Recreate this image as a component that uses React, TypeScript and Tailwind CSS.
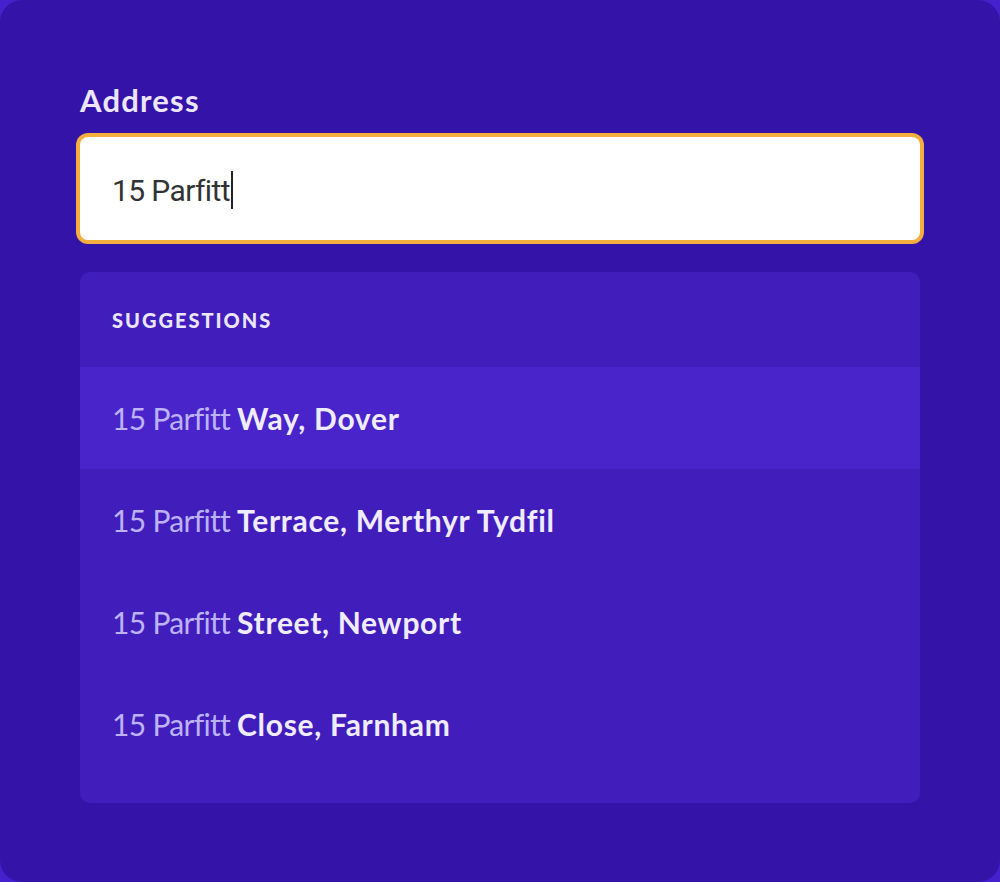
import React from 'react';

const suggestions = [
  { rest: 'Way, Dover', active: true },
  { rest: 'Terrace, Merthyr Tydfil', active: false },
  { rest: 'Street, Newport', active: false },
  { rest: 'Close, Farnham', active: false },
];

export default function App() {
  return (
    <div
      className="w-[1000px] h-[882px] bg-[#4321cc] [font-variant-ligatures:none]"
      style={{ fontFamily: 'Lato, "Open Sans", sans-serif' }}
    >
      <div className="w-full h-full rounded-[22px] bg-[#3414a8] px-[80px] pt-[82px]">
        <label className="block text-[31px] leading-[36px] font-bold text-[#ebe6fc] tracking-[1.2px] mb-[19px]">
          Address
        </label>

        <div className="h-[103px] bg-white rounded-[8px] shadow-[0_0_0_4px_#f4ae3e] pl-[32px] flex items-center">
          <span
            className="text-[30px] tracking-[-0.6px] text-[#333333] mt-[3px]"
            style={{ fontFamily: 'Roboto, "Noto Sans", sans-serif' }}
          >
            15 Parfitt
          </span>
          <span className="w-[2px] h-[38px] bg-[#222] ml-[1px] mt-[2px]" />
        </div>

        <div className="mt-[32px] bg-[#411ebb] rounded-[10px] pb-[28px]">
          <div className="h-[95px] pl-[32px] flex items-center">
            <span className="text-[20px] font-black tracking-[0.1em] text-[#ebe6ff]">SUGGESTIONS</span>
          </div>
          {suggestions.map((s) => (
            <div
              key={s.rest}
              className={`h-[102px] pl-[32px] flex items-center text-[30px] ${s.active ? 'bg-[#4824ca]' : ''}`}
            >
              <span className="font-normal text-[#bcb2f8] tracking-[-0.7px]">15 Parfitt</span>
              <span className="font-bold text-[#f0ecff] ml-[7px] tracking-[0.7px]">{s.rest}</span>
            </div>
          ))}
        </div>
      </div>
    </div>
  );
}
